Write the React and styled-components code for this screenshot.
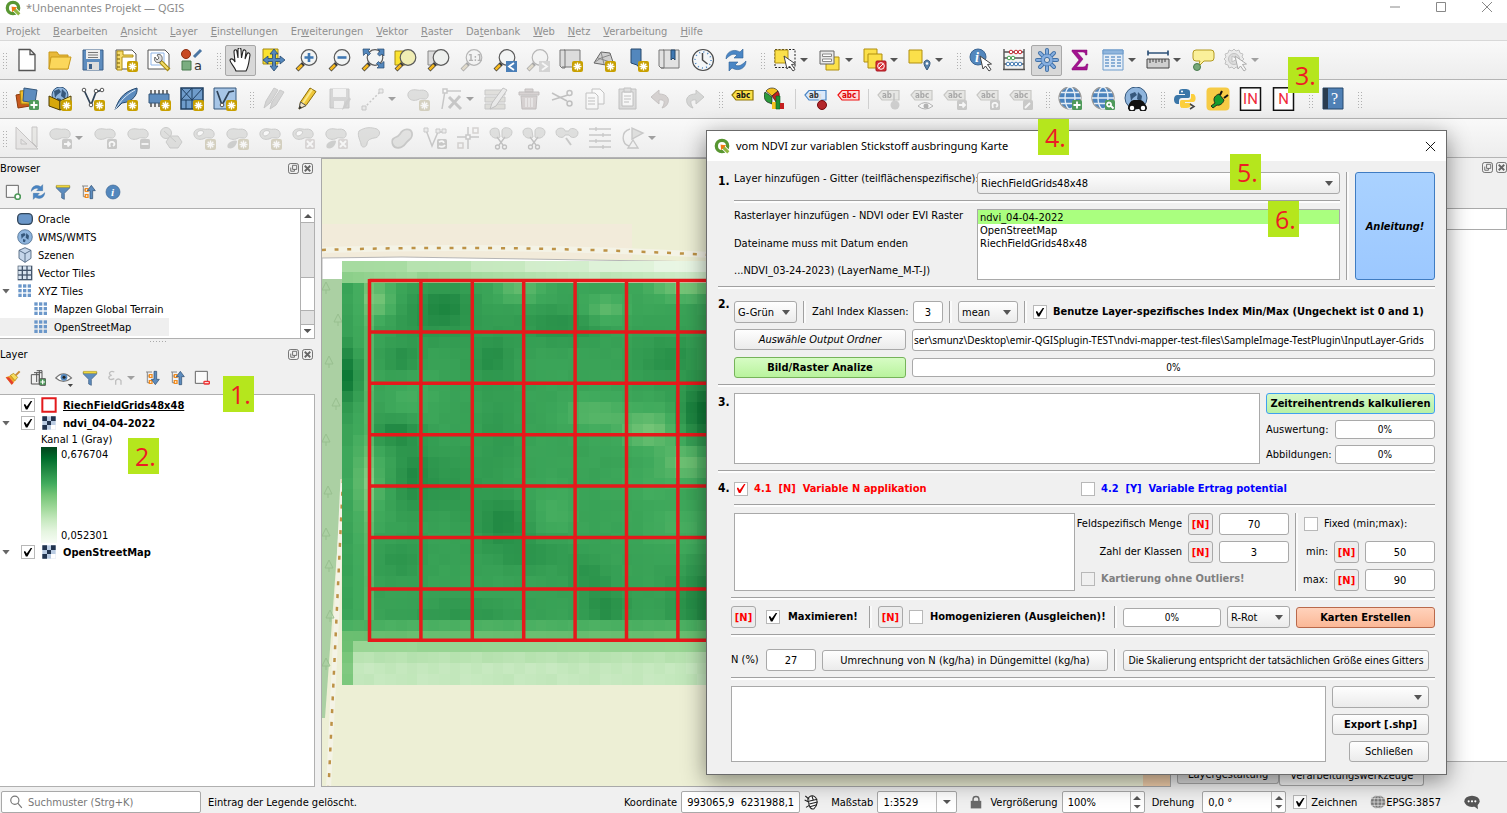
import * as React from "react"
import styled, { createGlobalStyle, css } from "styled-components"


const GlobalStyle = createGlobalStyle`
    *, *::before, *::after { box-sizing: border-box; }
    body {
        margin: 0;
        background: #f0f0f0;
        overflow: hidden;
    }
    body, button, input, select, textarea {
        font-family: "DejaVu Sans Condensed", "DejaVu Sans", sans-serif;
        font-size: 11px;
        color: #000;
    }
    ul { list-style: none; margin: 0; padding: 0; }
`;

/* ---------- icon drawings, all on a 24 x 24 board ---------- */

const Star = () => (
    <g>
        <rect x="13" y="13" width="11" height="11" rx="2" fill="#c8a000" />
        <path d="M18.5 14.5v8M14.5 18.5h8M15.7 15.7l5.6 5.6M21.3 15.7l-5.6 5.6" stroke="#fff" strokeWidth="1.4" />
    </g>
);
const Corner = ({ fill = "#8d8d85", d }) => (
    <g>
        <rect x="14" y="13" width="10" height="10" rx="1.5" fill={fill} />
        <path d={d} stroke="#fff" strokeWidth="1.8" fill="none" />
    </g>
);
const Lens = ({ fill = "#f2f4f4" }) => (
    <g>
        <path d="M8.500 15.500L2 22" stroke="#3c3c3c" strokeWidth="4" />
        <path d="M7 17L2.500 21.500" stroke="#f5b81e" strokeWidth="2.600" />
        <circle cx="14" cy="9.500" r="7.800" fill={fill} stroke="#5b5b5b" strokeWidth="1.200" />
    </g>
);
const Blob = ({ hole }) => (
    <g>
        <path d="M2 9C1 4 6 2 11 3c4 1 5-1 9 1 4 3 2 9-2 8-4 0-3-1-7 1-4 1-8 0-9-4z" fill="#bcc0b6" stroke="#8a8d86" />
        {hole && <path d="M5 8c0-3 3-4 6-3 2 2-2 5-4 5-1 0-2-1-2-2z" fill="#fff" stroke="#8a8d86" />}
    </g>
);
const Tag = ({ fill = "#d5d3b8", stroke = "#88856a", color = "#333", children = "abc" }) => (
    <g>
        <path d="M1 8L5 3.500H22V13H5z" fill={fill} stroke={stroke} strokeWidth="1.200" />
        <text x="5" y="11" fontSize="8" fontWeight="700" fontFamily="DejaVu Sans Condensed" fill={color}>{children}</text>
    </g>
);
const Earth = ({ r = 9, cx = 12, cy = 11 }) => (
    <g>
        <circle cx={cx} cy={cy} r={r} fill="#8fb5dd" stroke="#36587c" />
        <path d={`M${cx - 6} ${cy - 4}l5-2 2 3-4 3-2 3zM${cx + 2} ${cy - 6}l4 4-1 6-4-3zM${cx - 3} ${cy + 3}l4 1-1 4-3-1z`} fill="#36587c" />
    </g>
);
const Globe = () => (
    <g fill="none" stroke="#e6eef6" strokeWidth="1.300">
        <circle cx="12" cy="11" r="11" fill="#4b83bd" stroke="#9a9a9a" />
        <path d="M1 11h22M3 5.500h18M3 16.500h18" />
        <ellipse cx="12" cy="11" rx="5" ry="11" />
    </g>
);
const Cursor = () => <path d="M11 8l3 13 2.500-3 3.500 5 2-1.500-3.500-5 4-.5z" fill="#fff" stroke="#444" />;
const Scissors = () => (
    <g stroke="#777" fill="none" strokeWidth="1.300">
        <path d="M8 11l6 8M16 11l-6 8" /><circle cx="8.500" cy="21" r="2" /><circle cx="15.500" cy="21" r="2" />
    </g>
);
const Arrows = () => (
    <path d="M2 11C2 4 9 0 16 4l3-3v9h-9l3-3c-4-2-7 0-11 4zM22 13c0 7-7 11-14 7l-3 3v-9h9l-3 3c4 2 7 0 11-4z" fill="#4a86c5" stroke="#2d6096" strokeWidth=".6" />
);
const Funnel = () => (
    <g><path d="M2 3h20v3l-8 8v9l-4-2v-7L2 6z" fill="#5d8cbe" stroke="#36587c" /><path d="M2 2h20v3H2z" fill="#f6dc3b" stroke="#a58a12" strokeWidth=".6" /></g>
);
const TreeArrow = ({ down }) => (
    <g>
        <path d="M3 3h9M5 3v16M5 9h5M5 19h5" stroke="#888" strokeWidth="1.500" />
        <path d="M8 7h4v4H8zM8 16h4v4H8z" fill="#fff" stroke="#f28c1e" strokeWidth="2" />
        <path d={down ? "M15 2h4v12h4l-6 8-6-8h4z" : "M15 22h4V10h4l-6-8-6 8h4z"} fill="#5d8cbe" stroke="#2a4a6c" />
    </g>
);
const Dots = ({ full }) => (
    <g fill={full ? "#d9e4f0" : "#6b97c9"}>
        {full && <path d="M1 1h22v22H1z" fill="#44556b" />}
        {[2, 9, 16].map((y) => [2, 9, 16].map((x) => <rect key={x + "-" + y} x={x} y={y} width="5" height="5" />))}
    </g>
);
const Letters = ({ children }) => (
    <g>
        <rect x="1.500" y=".8" width="20" height="22.500" fill="#fff" stroke="#111" strokeWidth="1.500" />
        <text x="11.500" y="17" textAnchor="middle" fontSize="15" fontFamily="Roboto" fill="#ef2b3a">{children}</text>
    </g>
);
const Clock = () => (
    <g fill="none" stroke="#4a4a4a">
        <circle cx="12" cy="12" r="10.500" fill="#f4f6f7" strokeWidth="1.200" />
        <circle cx="12" cy="12" r="8" stroke="#4a86c5" strokeDasharray="1 3.200" strokeWidth="1.600" />
        <path d="M11.500 5v7l5 4" strokeWidth="1.500" />
    </g>
);

const ICONS = {
    file: <path d="M4 1.500h11l5 5v16H4zM15 1.500v5h5" fill="#fff" stroke="#555" strokeWidth="1.300" />,
    folder: <g stroke="#c99a1d"><path d="M1 4h8l2 3h9v14H1z" fill="#e8b93a" /><path d="M3 9h20l-3 12H1z" fill="#fbd75b" /></g>,
    save: <g><path d="M2 2h20v20H2z" fill="#5d8cbe" stroke="#3b5f88" /><path d="M5 2h14v9H5z" fill="#eee" /><path d="M7 4.500h10M7 7h10M7 9.500h10" stroke="#777" /><path d="M6 14h12v8H6z" fill="#dcdcdc" /><path d="M8 16h3v5H8z" fill="#3b5f88" /></g>,
    layoutNew: <g><path d="M2 2h16l4 4v15H2z" fill="#fff" stroke="#555" /><path d="M3 3h6v4h10v2H8v13H3z" fill="#f7dc6d" stroke="#b08f10" /><path d="M3 7h3M3 11h3M3 15h3M3 19h3" stroke="#705a08" /><Star /></g>,
    layoutMgr: <g><path d="M1 2h17l4 4v15H1z" fill="#fff" stroke="#555" /><path d="M4 5h13v12H4z" fill="none" stroke="#8fb5e8" /><path d="M13 13l9 9" stroke="#a58a12" strokeWidth="4" /><path d="M14 14l7 7" stroke="#f3dc6a" strokeWidth="2" /><path d="M8 9c-2 4 2 7 5 5l2-2c1-4-2-7-5-5l2 3-2 2z" fill="#ddd" stroke="#666" /></g>,
    style: <g><circle cx="6" cy="6" r="4.500" fill="#c84a24" stroke="#8c2f12" /><path d="M14 9l7-7" stroke="#4b76a3" strokeWidth="3" /><path d="M2 13h9v9H2z" fill="#7aad80" stroke="#487a4e" /><text x="14" y="22" fontSize="13" fill="#333" fontFamily="DejaVu Sans">a</text></g>,
    hand: <path d="M7 23c-1-4-6-8-6-11 1-2 4-1 5 2L5 4c0-3 3-3 3 0l1 6V2c0-3 3-3 3 0l.5 8L14 3c1-2 3-1 3 1l-1 7 2-5c1-2 3-1 3 1-1 5-1 11-4 16z" fill="#fff" stroke="#222" strokeWidth="1.100" />,
    pan: <g><path d="M1 1h15v15H1z" fill="#fbe330" stroke="#a58a12" /><path d="M12 1l4 5h-2.500v4.500H18V8l5 4-5 4v-2.500h-4.500V18H16l-4 5-4-5h2.500v-4.500H6V16l-5-4 5-4v2.500h4.500V6H8z" fill="#5387bd" stroke="#27496d" strokeWidth=".8" /></g>,
    zoomIn: <g><Lens /><path d="M14 5v9M9.500 9.500h9" stroke="#3f78b3" strokeWidth="2.600" /></g>,
    zoomOut: <g><Lens /><path d="M9.500 9.500h9" stroke="#3f78b3" strokeWidth="2.600" /></g>,
    zoomFull: <g><Lens /><path d="M2 1h7L7 3l2.500 2.500-2 2L5 5 2.500 7.500zM23 1v7l-2-2-2.500 2-2-2L19 3l-2.500-2zM23 20h-7l2-2-2.500-2.500 2-2L20 16l3-2.500z" fill="#5387bd" stroke="#27496d" strokeWidth=".7" /></g>,
    zoomSel: <g><path d="M1 3h10v14H1z" fill="#fbe330" stroke="#a58a12" /><Lens fill="#f0edb4" /></g>,
    zoomLayer: <g><path d="M1 3h10v14H1z" fill="#dcdcdc" stroke="#888" /><Lens fill="#eef0ee" /></g>,
    zoomNative: <g><Lens /><text x="8" y="13" fontSize="9" fontWeight="700" fill="#555">1:1</text></g>,
    zoomLast: <g><Lens /><rect x="13" y="13" width="11" height="11" fill="#4a7fb8" /><path d="M21 15l-5 3.500 5 3.500" stroke="#fff" strokeWidth="1.800" fill="none" /></g>,
    zoomNext: <g><Lens /><rect x="13" y="13" width="11" height="11" fill="#aaa" /><path d="M16 15l5 3.500-5 3.500" stroke="#fff" strokeWidth="1.800" fill="none" /></g>,
    mapNew: <g><path d="M1 2h5v18H3l-2-2zM5 2h16v17H3" fill="#dcdcdc" stroke="#777" /><Star /></g>,
    view3d: <g><path d="M2 15L9 4l9 1 3 9-7 3z" fill="#cfcfcf" stroke="#666" /><path d="M3 14l6-4 9-3M6 10l12 4M9 4l3 12" stroke="#888" fill="none" /><Star /></g>,
    bookmarkNew: <g><path d="M6 1h10v21l-4-5-6-2z" fill="#5387bd" stroke="#27496d" /><Star /></g>,
    bookmarks: <g><path d="M1 2h5v18H3l-2-2zM5 2h16v18H3" fill="#e2e2e2" stroke="#777" /><path d="M13 2h4v10l-2-2-2 2z" fill="#3f78b3" stroke="#27496d" /></g>,
    clock: <Clock />,
    refresh: <Arrows />,
    select: <g><path d="M2 1.500h20v18H2z" fill="none" stroke="#222" strokeDasharray="2 1.500" /><path d="M2 2h13v13H2z" fill="#fbe04a" stroke="#b08f10" /><Cursor /></g>,
    selectForm: <g><path d="M8 9h13v13H8z" fill="#fbe04a" stroke="#b08f10" /><path d="M2 3h14v13H2z" fill="#e9e9e9" stroke="#666" /><path d="M4.500 6h9v2.500h-9zM4.500 11h9v2.500h-9z" fill="#fff" stroke="#888" /></g>,
    deselect: <g fill="#fbe04a" stroke="#b08f10"><path d="M1 1h13v13H1z" /><path d="M5 6h14v14H5z" /><rect x="13" y="13" width="10" height="10" rx="1" fill="#d8313a" stroke="#a5141d" /><circle cx="18" cy="18" r="3.300" fill="none" stroke="#fff" /><path d="M16 20l4-4" stroke="#fff" /></g>,
    selectLoc: <g><path d="M1 2h13v13H1z" fill="#fbe04a" stroke="#b08f10" /><path d="M19 22c-4-6-4-9 0-10 4 1 4 4 0 10z" fill="#5b84ad" stroke="#36587c" /><circle cx="19" cy="15.500" r="1.300" fill="#fff" /></g>,
    identify: <g><circle cx="9" cy="9" r="8" fill="#5387bd" stroke="#3b6593" /><text x="6" y="14" fontSize="14" fontStyle="italic" fontWeight="700" fill="#fff" fontFamily="Liberation Serif">i</text><Cursor /></g>,
    abacus: <g fill="none" stroke="#555"><path d="M2 1v20M22 1v20M1 21.500h22M2 4h20M2 10h20M2 16h20" strokeWidth="1.400" /><g stroke="#c5242c"><circle cx="9" cy="4" r="1.800" fill="#fff" /><circle cx="14" cy="4" r="1.800" fill="#fff" /><circle cx="18" cy="4" r="1.800" fill="#fff" /></g><g stroke="#3fa04c"><circle cx="7" cy="10" r="1.800" fill="#fff" /><circle cx="11" cy="10" r="1.800" fill="#fff" /></g><g stroke="#3f78b3"><circle cx="6" cy="16" r="1.800" fill="#fff" /><circle cx="10" cy="16" r="1.800" fill="#fff" /><circle cx="14" cy="16" r="1.800" fill="#fff" /><circle cx="18" cy="16" r="1.800" fill="#fff" /></g></g>,
    gear: <g><path d="M12 2v20M2 12h20M5 5l14 14M19 5L5 19" stroke="#3f6fa5" strokeWidth="4" strokeLinecap="round" /><path d="M12 2v20M2 12h20M5 5l14 14M19 5L5 19" stroke="#85aee0" strokeWidth="2.200" strokeLinecap="round" /><circle cx="12" cy="12" r="6" fill="#85aee0" stroke="#3f6fa5" strokeWidth=".6" /><circle cx="12" cy="12" r="2.600" fill="#dcdcdc" stroke="#3f6fa5" /></g>,
    sum: <path d="M4 2h15v5h-1.500c0-2-1-3-3-3H9l6 7-6.500 8H15c2 0 3-1 3.500-3H20l-1 6H4v-1.500L11 12 4 3.500z" fill="#a2128f" stroke="#820b73" strokeWidth=".5" />,
    table: <g stroke="#6c9bcb" fill="none"><path d="M2 2h20v20H2z" fill="#e6eef7" /><path d="M2 2h20v4H2z" fill="#8fb5dd" /><path d="M4 9h4M10 9h4M16 9h4M4 12h4M10 12h4M16 12h4M4 15h4M10 15h4M16 15h4M4 18h4M10 18h4M16 18h4" strokeWidth="1.300" /></g>,
    ruler: <g stroke="#444"><path d="M2 5h20M2 2.500v5M22 2.500v5" stroke="#2f5379" strokeWidth="1.700" /><path d="M1 11h22v9H1z" fill="#cfcfcf" /><path d="M4 11v4M7 11v3M10 11v4M13 11v3M16 11v4M19 11v3" /></g>,
    tip: <g><path d="M5 2h15q3 0 3 3v5q0 3-3 3h-7l-6 6 2-6H5q-3 0-3-3V5q0-3 3-3z" fill="#faf09a" stroke="#b39a20" /><circle cx="6" cy="19" r="3.500" fill="#77a878" stroke="#487a4e" /></g>,
    action: <g fill="#ddd" stroke="#777"><path d="M10 1l2 2 3-1 1 3 3 1-1 3 2 2-2 2 1 3-3 1-1 3-3-1-2 2-2-2-3 1-1-3-3-1 1-3-2-2 2-2-1-3 3-1 1-3 3 1z" /><circle cx="10" cy="11" r="5.500" fill="#bbb" /><path d="M8 8l5 3-5 3z" fill="#fff" /><Cursor /></g>,

    addLayer: <g><path d="M1 8l11-2 3 13-12 2z" fill="#c8591e" stroke="#8c3a0d" /><path d="M5 4l12-1 1 14H6z" fill="#f0bd2c" stroke="#a37b0c" /><path d="M9 1l13 2-2 13-12-2z" fill="#5d8cbe" stroke="#36587c" /><Corner fill="#4f9a5b" d="M19 14.500v7M15.500 18h7" /></g>,
    package: <g><Earth r={8} cy={8} /><path d="M1 9l11 5v9L1 19z" fill="#d7a80c" stroke="#4a3b05" /><path d="M12 14l11-5v10l-11 4z" fill="#f9e468" stroke="#4a3b05" /><Star /></g>,
    vNew: <g><path d="M3 3l7 15 5-13 6-2" fill="none" stroke="#2f4256" strokeWidth="1.700" /><g fill="#fff" stroke="#555"><circle cx="3" cy="3" r="1.800" /><circle cx="10" cy="18" r="1.800" /><circle cx="15" cy="4" r="1.800" /><circle cx="21" cy="3" r="1.800" /></g><Star /></g>,
    feather: <g><path d="M1 23C4 14 8 5 23 1c1 6-4 14-15 15z" fill="#5d8cbe" stroke="#27496d" /><path d="M1 23C7 13 12 8 21 3" stroke="#d9e7f5" fill="none" /><Star /></g>,
    chip: <g><path d="M4 3v17M8 3v17M12 3v17M16 3v17M20 3v17" stroke="#333" strokeWidth="1.300" /><path d="M2 7h20v9H2z" fill="#5d8cbe" stroke="#36587c" /><Star /></g>,
    mesh: <g><path d="M1 1h22v21H1z" fill="#6f9ccb" stroke="#1f3e60" strokeWidth="1.500" /><path d="M1 13h22M12 1v21M1 1l11 12L23 1M1 13L12 1M6 13v9" stroke="#1f3e60" fill="none" /><Star /></g>,
    vLayer: <g><path d="M1 1h22v21H1z" fill="#a6c5e6" stroke="#36587c" /><path d="M4 4l5 14 7-13 5-1" fill="none" stroke="#2f4256" strokeWidth="1.700" /><circle cx="9" cy="18" r="1.800" fill="#fff" stroke="#555" /><Star /></g>,
    pencils: <g fill="#aaa" stroke="#888"><path d="M2 21l2-7L12 1l4 2-8 13zM8 22l2-7 8-12 4 2-8 13z" /></g>,
    pencil: <g><path d="M4 22l1.500-7L15 1l6 3.500-10 14z" fill="#efc73a" stroke="#8b6c0a" /><path d="M8 16L17 2.500" stroke="#fbe98c" strokeWidth="2" /><path d="M4 22l1.500-7 5.500 3.500z" fill="#f3e6c8" stroke="#555" /><path d="M4 22l.8-3 2 1.300z" fill="#222" /></g>,
    saveEdit: <g><path d="M2 2h19v19H2z" fill="#aaa" stroke="#888" /><path d="M5 2h13v8H5zM6 14h10v7H6z" fill="#eee" /><path d="M14 23l2-6 5-7 2 2-5 8z" fill="#999" /></g>,
    digitize: <g><path d="M3 21L20 4" stroke="#888" strokeWidth="1.500" strokeDasharray="2 2" /><path d="M1 19h4v4H1zM18 2h4v4h-4z" fill="#ddd" stroke="#888" /></g>,
    blobNew: <g><Blob /><Star /></g>,
    vertex: <g stroke="#888" fill="none" strokeWidth="1.500"><path d="M3 22L6 4h16" /><path d="M4 2h4v4H4z" fill="#fff" /><path d="M10 10l12 12M21 9L10 21" strokeWidth="3" /></g>,
    multiEdit: <g><path d="M1 3h20v5H1zM1 10h20v5H1zM1 17h20v5H1z" fill="#c5c29c" stroke="#888" /><path d="M6 22l2-6L19 1l4 2-11 16z" fill="#ddd" stroke="#777" /></g>,
    trash: <g fill="#c89a9a" stroke="#8e6a6a"><path d="M2 5h20v3H2zM8 2h8v3H8zM4 9h16l-1 13H5z" /><path d="M9 11v9M12 11v9M15 11v9" stroke="#fff" /></g>,
    cut: <g fill="none" stroke="#777" strokeWidth="1.500"><path d="M2 6l15 8M2 13l16-5" /><circle cx="19.500" cy="6" r="2.500" /><circle cx="19.500" cy="16.500" r="2.500" /></g>,
    copy: <g fill="#fff" stroke="#777"><path d="M9 2h8l4 4v11H9z" /><path d="M3 6h9l3 3v13H3z" /><path d="M5 11h7M5 14h7M5 17h7" /></g>,
    paste: <g fill="#bbb" stroke="#777"><path d="M3 2h17v20H3z" /><path d="M6 5h11v14H6z" fill="#fff" /><path d="M8 1h7v4H8z" /><path d="M8 9h7M8 12h7M8 15h5" /></g>,
    undo: <path d="M10 3L2 10l8 7v-4c5-1 7 2 3 8 8-2 10-14-3-14z" fill="#bf9a92" stroke="#96736c" />,
    redo: <path d="M14 3l8 7-8 7v-4c-5-1-7 2-3 8-8-2-10-14 3-14z" fill="#a7ada5" stroke="#7e857c" />,
    labelYellow: <Tag fill="#fbe04a" stroke="#8f7606" color="#111" />,
    diagram: <g><path d="M8 10L1 5a8 8 0 0 0 2 10l5 2z" fill="#2b9a3c" stroke="#111" strokeWidth=".6" /><path d="M8 9L2 4c3-4 9-4 12 0z" fill="#f4c21f" stroke="#111" strokeWidth=".6" /><path d="M8 9l6-5a8 8 0 0 1-2 11z" fill="#c41f1f" stroke="#111" strokeWidth=".6" /><path d="M8 15h4v7H8z" fill="#f4c21f" /><path d="M12 9h4v13h-4z" fill="#1f8f35" stroke="#0b5a1b" strokeWidth=".6" /><path d="M16 16h4v6h-4z" fill="#c41f1f" /></g>,
    labelPin: <g><Tag fill="#dbe9fa" stroke="#4a86c5">ab</Tag><path d="M16 7v9" stroke="#ddd" strokeWidth="2.500" /><circle cx="18" cy="18" r="4.500" fill="#b3262a" stroke="#74090d" /></g>,
    labelRed: <Tag fill="#ffd9d9" stroke="#e11" color="#d00" />,
    labelMovePin: <g><Tag>ab</Tag><path d="M17 6v10" stroke="#777" strokeWidth="1.500" /><circle cx="18" cy="18" r="4.500" fill="#999" /></g>,
    labelShow: <g><Tag /><path d="M8 19q7-7 15 0-8 6-15 0z" fill="#fff" stroke="#555" /><circle cx="16" cy="19" r="2.500" fill="#555" /></g>,
    labelMove: <g><Tag /><Corner d="M16 18h6M19.500 15.500L22 18l-2.500 2.500" /></g>,
    labelRotate: <g><Tag /><Corner d="M17 21q-2-6 3-5 3 2 0 4" /></g>,
    labelEdit: <g><Tag /><Corner d="M16 21l5-5" /></g>,
    globeAdd: <g><Globe /><Corner fill="#4f9a5b" d="M19 14.500v7M15.500 18h7" /></g>,
    globeFind: <g><Globe /><Corner fill="#4f9a5b" d="M20 19l2.500 2.500M18 15.500a2 2 0 1 0 .1 0" /></g>,
    globeLook: <g><Earth r={11} /><path d="M4 22c0-5 3-9 6-9h6c3 0 6 4 7 9" fill="#111" /><circle cx="8" cy="21" r="3" fill="#fff" stroke="#111" strokeWidth="1.500" /><circle cx="19" cy="21" r="3" fill="#fff" stroke="#111" strokeWidth="1.500" /></g>,
    python: <g><path d="M11 2c-5 0-5 1-5 5h6v1H4c-4 0-4 9 0 9h2v-3c0-2 1-3 3-3h6c2 0 2-1 2-3V5c0-3-3-3-6-3z" fill="#3a76a8" /><path d="M12 21c5 0 6-1 6-5h-6v-1h8c4 0 3-8 0-8h-2v3c0 2-1 3-3 3H9c-2 0-2 1-2 3v2c0 3 2 3 5 3z" fill="#fccf3d" /><circle cx="9" cy="4.500" r="1" fill="#fff" /><path d="M17 17l4 2.500-4 2.500" stroke="#444" strokeWidth="1.500" fill="none" /></g>,
    plug: <g><rect x=".5" y=".5" width="23" height="23" rx="4" fill="#f6cb45" /><path d="M5 19l4-3c-3-5 1-8 4-9l5 6c-1 4-5 6-7 5l-4 3z" fill="#169c2f" stroke="#111" strokeWidth=".8" /><path d="M14 8l2-4M18 11l4-3" stroke="#111" strokeWidth="2" /></g>,
    inBox: <Letters>IN</Letters>,
    nBox: <Letters>N</Letters>,
    help: <g><path d="M2 1h20v21H2z" fill="#4f80b5" stroke="#27496d" /><path d="M2 1h5v21H2z" fill="#2a3c4f" /><text x="10" y="17" fontSize="16" fontFamily="Liberation Serif" fill="#fff">?</text></g>,

    cad: <g fill="#ddd1cd" stroke="#8d7f7b"><path d="M17 1h5v20l-5-5z" fill="#d6d6c0" /><path d="M1 1v22h22zM6 13v5h6z" /></g>,
    blobMove: <g><Blob /><Corner d="M16 18h6M19.500 15.500L22 18l-2.500 2.500" /></g>,
    blobTurn: <g><Blob /><Corner d="M17 21q-2-6 3-5 3 2 0 4" /></g>,
    blobScale: <g><Blob /><Corner d="M15.500 18h7" /></g>,
    blobHex: <g fill="#bcc0b6" stroke="#8a8d86"><circle cx="7" cy="7" r="5.500" /><path d="M11 10h8l4 6-4 6h-8l-4-6z" /><path d="M5 5l12 11" /></g>,
    ring: <g><Blob hole /><Star /></g>,
    part: <g><Blob /><path d="M3 22c-3-4 5-9 9-7 0 4-4 9-9 7z" fill="#999c94" /><Star /></g>,
    ringFill: <g><Blob hole /><Star /></g>,
    ringDel: <g><Blob hole /><Corner fill="#c8a8a4" d="M16 15l6 6M22 15l-6 6" /></g>,
    partDel: <g><Blob /><path d="M3 22c-3-4 5-9 9-7 0 4-4 9-9 7z" fill="#999c94" /><Corner fill="#c8a8a4" d="M16 15l6 6M22 15l-6 6" /></g>,
    reshape: <path d="M2 5c6-4 12-4 18-2 5 3 2 9-3 9-5 1-7 3-7 6-1 4-6 4-6 0-1-4-4-9-2-13z" fill="#bcc0b6" stroke="#8a8d86" />,
    offset: <path d="M3 13c3-3 4-1 7-5 3-6 11-6 12-1 1 6-3 6-6 10-4 6-11 6-13 2-1-2-1-5 0-6z" fill="#c4c8be" stroke="#8a8d86" strokeWidth="1.800" />,
    reverse: <g><path d="M3 4l6 16 6-14h6" fill="none" stroke="#888" strokeWidth="1.500" /><path d="M1 2h4v4H1zM13 3h4v4h-4zM19 3h4v4h-4z" fill="#ddd" stroke="#888" /><Corner d="M16 16q4-2 5 1M16 20q4 2 6-1" /></g>,
    trim: <g stroke="#888" fill="none" strokeWidth="1.500"><path d="M12 1v8M12 13v10M1 11h9M14 11h9" /><path d="M10 9h4v4h-4z" fill="#fff" /><path d="M17 2h5v5h-5zM2 17h5v5H2z" stroke="#b59c8c" /></g>,
    split: <g fill="#bcc0b6" stroke="#8a8d86"><path d="M1 6c0-5 9-5 9-1l1 6c-4 3-10 0-10-5zM13 5c0-5 10-4 10 1s-6 8-10 5z" /><Scissors /></g>,
    merge: <g fill="#bcc0b6" stroke="#8a8d86"><path d="M1 6c0-5 9-5 9-1h4c0-4 9-3 9 2s-7 6-9 2h-4c-1 4-9 3-9-3z" /><path d="M11 12l5 7" strokeWidth="2" /></g>,
    align: <g stroke="#888" strokeWidth="1.300"><path d="M1 3h22M1 9h22M1 15h22M1 21h22M8 1v4M15 7v4M8 13v4M15 19v4" /></g>,
    symbolTurn: <g fill="none" stroke="#888" strokeWidth="1.400"><path d="M9 3C-1 6 1 18 8 20" /><path d="M11 2v11l11-6z" fill="#bcc0b6" /><path d="M7 22l5-8 5 8z" /></g>,

    addSmall: <g><path d="M2 2h18v18H2z" fill="#fafafa" stroke="#666" strokeWidth="1.500" /><circle cx="19" cy="19" r="4" fill="#fff" stroke="#4f9a5b" strokeWidth="2.500" /></g>,
    funnel: <Funnel />,
    collapse: <TreeArrow />,
    expand: <TreeArrow down />,
    info: <g><circle cx="12" cy="12" r="10.500" fill="#5387bd" stroke="#3b6593" /><text x="9" y="18" fontSize="17" fontStyle="italic" fontWeight="700" fill="#fff" fontFamily="Liberation Serif">i</text></g>,
    brush: <g><path d="M1 11l8-3 7 7-6 7z" fill="#f0a52c" /><path d="M1 11l5 0 7 8-3 3z" fill="#e4402e" /><path d="M8 8l5-3 6 6-4 5z" fill="#f6dc5b" stroke="#a37b0c" /><path d="M16 8l6-6" stroke="#c98a35" strokeWidth="3" /></g>,
    group: <g fill="none" stroke="#555" strokeWidth="1.500"><path d="M2 7h12v14H2zM6 4h12v14M10 4v14M14 1v16" /><path d="M10 1h8v3" /><Corner fill="#4f9a5b" d="M19 14.500v7M15.500 18h7" /></g>,
    eye: <g><path d="M1 12Q11 1 22 12 11 21 1 12z" fill="#fff" stroke="#777" strokeWidth="1.500" /><circle cx="12" cy="11" r="4.500" fill="#5387bd" /><circle cx="12" cy="11" r="2" fill="#222" /><path d="M17 20h7l-3.500 4z" fill="#444" /></g>,
    epsilon: <g fill="none" stroke="#777" strokeWidth="2"><path d="M11 3C4 0 1 7 7 8 0 9 2 17 11 13" /><path d="M13 22v-6q4-5 8 0v6" /></g>,
    remove: <g><path d="M2 2h18v18H2z" fill="#fafafa" stroke="#666" strokeWidth="1.500" /><rect x="14" y="16" width="10" height="6" rx="2" fill="#e33" /><path d="M16 19h6" stroke="#fff" strokeWidth="1.500" /></g>,

    db: <rect x="1" y="4" width="22" height="16" rx="6" fill="#6b97c9" stroke="#33475c" strokeWidth="2" />,
    earth: <Earth r={11} cy={12} />,
    cube: <g fill="#c5d6ea" stroke="#4a617c" strokeWidth="1.300"><path d="M12 1l9 4v12l-9 6-9-6V5z" /><path d="M3 5l9 5 9-5M12 10v13" fill="none" /></g>,
    grid: <Dots full />,
    tiles: <Dots />,
    raster: <g fill="#22344f"><path d="M2 2h20v20H2z" fill="#b9cbe2" /><path d="M2 2h7v7H2zM15 2h7v7h-7zM9 9h6v6H9zM2 15h7v7H2z" /><path d="M15 15h7v7h-7z" fill="#fff" /></g>,
    redBox: <path d="M2 2h20v20H2z" fill="#fff" stroke="#e31a1c" strokeWidth="3" />,

    search: <g fill="none" stroke="#777" strokeWidth="2"><circle cx="10" cy="9" r="7" /><path d="M15 14l7 8" /></g>,
    extent: <g fill="#fff" stroke="#222" strokeWidth="1.600"><path d="M7 12c-4-6 4-12 9-8 6 4 4 14-1 18-5 2-8-4-8-10z" /><path d="M7 11l13-3M12 3l2 7M8 15l12-3M9 19l10-3M2 3l6 5M1 9l6 3M3 20l5-3" /></g>,
    lock: <g fill="#6a6a6a"><path d="M3 10h18v13H3z" /><path d="M7 11V7c0-6 10-6 10 0v4" fill="none" stroke="#6a6a6a" strokeWidth="2.500" /></g>,
    proj: <g fill="#777" stroke="#f0f0f0" strokeWidth="1"><ellipse cx="12" cy="12" rx="11.500" ry="10" /><path d="M1 12h22M3 7h18M3 17h18M12 2v20" /><ellipse cx="12" cy="12" rx="6" ry="10" fill="none" /></g>,
    chat: <g fill="#555"><ellipse cx="12" cy="11" rx="11.500" ry="8.500" /><path d="M13 17l8 6-1-9z" /><g fill="#fff"><circle cx="7" cy="11" r="1.600" /><circle cx="12" cy="11" r="1.600" /><circle cx="17" cy="11" r="1.600" /></g></g>,
    logo: <g><circle cx="12" cy="12" r="8.500" fill="none" stroke="#589632" strokeWidth="5" /><path d="M12 12l10 10" stroke="#fff" strokeWidth="7" /><path d="M12.500 12.500l9 9" stroke="#8fb63e" strokeWidth="4.500" /><path d="M11 11l5 .5-4.500 4.500z" fill="#ee7913" stroke="#ee7913" strokeWidth="2" /></g>,
    minimize: <path d="M2 12h20" stroke="#888" strokeWidth="2" />,
    maximize: <path d="M3 3h18v18H3z" fill="none" stroke="#888" strokeWidth="2" />,
    close: <path d="M2 2l20 20M22 2L2 22" stroke="currentColor" strokeWidth="2" />,
    float: <g fill="none" stroke="#666" strokeWidth="2"><rect x="1" y="1" width="22" height="22" rx="5" /><path d="M10 5h9v9h-9zM6 10v8h8v-4" /></g>,
    shut: <g fill="none" stroke="#666"><rect x="1" y="1" width="22" height="22" rx="5" strokeWidth="2" /><path d="M6 6l12 12M18 6L6 18" strokeWidth="4" /></g>,
};

const Svg = styled.svg`
    display: block;
    flex: none;
    width: ${(p) => p.$size}px;
    height: ${(p) => p.$size}px;
    ${(p) => p.$off && css`
        opacity: 0.4;
        filter: grayscale(0.75);
    `}
`;
const Icon = ({ name, size = 24, off }) => (
    <Svg viewBox="0 0 24 24" $size={size} $off={off} aria-hidden="true">{ICONS[name]}</Svg>
);

/* ---------- main window ---------- */

const Window = styled.div`
    position: relative;
    display: flex;
    flex-direction: column;
    height: 100vh;
    overflow: hidden;
    background: #f0f0f0;
`;
const TitleBar = styled.header`
    display: flex;
    align-items: flex-start;
    height: 23px;
    padding: 0 14px 0 5px;
    gap: 5px;
    background: #fff;
    color: #8c8c8c;
    font: 11px/16px "Noto Sans", sans-serif;
`;
const TitleText = styled.span`
    flex: 1;
`;
const WindowButton = styled.button`
    display: flex;
    padding: 1px 0 0;
    margin-left: 29px;
    border: 0;
    background: none;
    color: #888;
`;
const MenuBar = styled.nav`
    display: flex;
    gap: 13px;
    height: 18px;
    padding: 1px 6px 0;
    border-bottom: 1px solid #d8d8d8;
`;
const MenuLink = styled.a`
    line-height: 16px;
    color: #8f8f8f;
    text-decoration: none;
`;
const ToolRow = styled.div`
    display: flex;
    align-items: center;
    height: 39px;
    background: linear-gradient(#f9f9f9, #ededed);
    border-bottom: 1px solid #b4b4b4;
`;
const Handle = styled.span`
    width: 5px;
    height: 17px;
    margin: 0 3px 0 8px;
    background: radial-gradient(circle, #b0b0b0 0.8px, transparent 1px) 0 0 / 3px 3px;
    &:first-child { margin-left: 2px; }
`;
const Divider = styled.span`
    width: 1px;
    height: 20px;
    margin: 0 3px 0 3px;
    background: #cfcfcf;
`;
const Tool = styled.button`
    display: flex;
    align-items: center;
    justify-content: space-between;
    width: ${(p) => (p.$menu ? 43 : 31)}px;
    height: 31px;
    margin: 0 1px;
    padding: 0 3px;
    border: 1px solid ${(p) => (p.$on ? "#a8a8a8" : "transparent")};
    border-radius: 2px;
    background: ${(p) => (p.$on ? "#d8d8d8" : "none")};
`;
const Caret = styled.span`
    width: 8px;
    height: 4px;
    background: ${(p) => (p.$off ? "#a0a0a0" : "#555")};
    clip-path: polygon(0 0, 100% 0, 50% 100%);
`;

const MENU = [["Pro", "j", "ekt"], ["", "B", "earbeiten"], ["", "A", "nsicht"], ["", "L", "ayer"], ["", "E", "instellungen"], ["Er", "w", "eiterungen"],
    ["", "V", "ektor"], ["", "R", "aster"], ["Da", "t", "enbank"], ["", "W", "eb"], ["", "N", "etz"], ["", "V", "erarbeitung"], ["", "H", "ilfe"]];

/* "|" = handle, "/" = divider, "+" = with menu arrow, "-" = disabled, "*" = pressed */
const ROWS = [
    "| file folder save layoutNew layoutMgr style | hand* pan zoomIn zoomOut zoomFull zoomSel zoomLayer zoomNative- zoomLast zoomNext- mapNew view3d bookmarkNew bookmarks clock refresh | select+ selectForm+ deselect+ selectLoc+ | identify abacus gear* sum table+ ruler+ tip action-+",
    "| addLayer package vNew feather chip mesh vLayer | pencils- pencil saveEdit- digitize-+ blobNew- vertex-+ multiEdit- trash- cut- copy- paste- undo- redo- | labelYellow diagram / labelPin labelRed / labelMovePin- labelShow- labelMove- labelRotate- labelEdit- | globeAdd globeFind globeLook | python plug inBox nBox | help |",
    "| cad- blobMove-+ blobTurn- blobScale- blobHex- ring- part- ringFill- ringDel- partDel- reshape- offset- reverse- trim- split- split- merge- align- symbolTurn-+",
];

const ToolBar = ({ items }) => (
    <ToolRow role="toolbar">
        {items.split(" ").map((item, i) => {
            if (item === "|") return <Handle key={i} />;
            if (item === "/") return <Divider key={i} />;
            const name = item.replace(/[-+*]/g, "");
            const off = item.includes("-");
            return (
                <Tool key={i} aria-label={name} $on={item.includes("*")} $menu={item.includes("+")}>
                    <Icon name={name} off={off} />
                    {item.includes("+") && <Caret $off={off} />}
                </Tool>
            );
        })}
    </ToolRow>
);

const Main = styled.main`
    display: flex;
    flex: 1;
    min-height: 0;
`;
const LeftDock = styled.aside`
    display: flex;
    flex-direction: column;
    flex: none;
    width: 315px;
    margin-right: 6px;
    padding-top: 1px;
`;
const DockTitle = styled.div`
    display: flex;
    align-items: center;
    gap: 3px;
    height: 20px;
    padding-right: ${(p) => (p.$flush ? 0 : 2)}px;
    padding-bottom: 2px;
    span { flex: 1; }
`;
const DockButton = styled.button`
    padding: 0;
    border: 0;
    background: none;
`;
const DockTools = styled.div`
    display: flex;
    align-items: center;
    gap: 9px;
    height: 29px;
    padding: 0 5px 3px;
`;
const DockTool = styled.button`
    display: flex;
    align-items: center;
    gap: 4px;
    padding: 0;
    border: 0;
    background: none;
`;
const Tree = styled.div`
    display: flex;
    flex: ${(p) => (p.$fill ? "1" : "none")};
    height: ${(p) => (p.$fill ? "auto" : "131px")};
    overflow: hidden;
    background: #fff;
    border: 1px solid #b0b0b0;
    border-left: 0;
`;
const TreeList = styled.ul`
    flex: 1;
    padding-top: 1px !important;
`;
const TreeRow = styled.li`
    display: flex;
    align-items: center;
    width: ${(p) => (p.$hover ? "169px" : "auto")};
    height: 18px;
    padding-left: ${(p) => (p.$level ? 33 : 2)}px;
    gap: 5px;
    background: ${(p) => (p.$hover ? "#efefef" : "none")};
    font-weight: ${(p) => (p.$bold ? 700 : 400)};
    text-decoration: ${(p) => (p.$active ? "underline" : "none")};
`;
const Expander = styled.span`
    width: 8px;
    height: 5px;
    margin-right: 2px;
    background: ${(p) => (p.$open ? "#666" : "transparent")};
    clip-path: polygon(0 0, 100% 0, 50% 100%);
`;
const ScrollBar = styled.div`
    display: flex;
    flex-direction: column;
    justify-content: space-between;
    align-items: center;
    width: 14px;
    padding: 5px 0;
    border-left: 1px solid #b0b0b0;
    background: linear-gradient(#fff 13px, #b0b0b0 13px 14px, #e2e2e2 14px 68px, #b0b0b0 68px 69px, #fff 69px 101px, #b0b0b0 101px 102px, #e2e2e2 102px 115px, #b0b0b0 115px 116px, #fff 116px);
`;
const ScrollArrow = styled(Caret)`
    transform: ${(p) => (p.$up ? "rotate(180deg)" : "none")};
`;
const SplitGrip = styled.div`
    width: 17px;
    height: 6px;
    margin: 0 auto;
    background: radial-gradient(circle, #aaa 0.8px, transparent 1px) 0 1px / 3px 3px repeat-x;
`;
const Legend = styled.li`
    padding-left: 41px;
    line-height: 15px;
    height: 111px;
`;
const LegendRamp = styled.div`
    display: flex;
    height: 96px;
    gap: 4px;
    &::before {
        content: "";
        width: 16px;
        background: linear-gradient(#00441b, #006d2c 12%, #238b45 25%, #41ab5d 38%, #74c476 50%, #a1d99b 64%, #c7e9c0 76%, #e5f5e0 88%, #f7fcf5);
    }
`;
const LegendValues = styled.div`
    display: flex;
    flex-direction: column;
    justify-content: space-between;
`;

const Check = styled.input.attrs({ type: "checkbox" })`
    appearance: none;
    display: grid;
    place-items: center;
    flex: none;
    width: 14px;
    height: 14px;
    margin: 0;
    border: 1px solid #b8b8b8;
    background: ${(p) => (p.disabled ? "#f0f0f0" : "#fff")};
    color: ${(p) => p.$color || "#000"};
    &:checked::before {
        content: "";
        width: 9px;
        height: 9px;
        background: currentColor;
        clip-path: polygon(0 42%, 20% 42%, 36% 68%, 84% 0, 100% 0, 44% 100%, 26% 100%);
    }
`;
const LayerCheck = styled(Check)`
    margin-left: 4px;
    margin-right: 1px;
    & ~ label { margin-left: 1px; }
`;

const BROWSER = [["db", "Oracle"], ["earth", "WMS/WMTS"], ["cube", "Szenen"], ["grid", "Vector Tiles"], ["tiles", "XYZ Tiles", 0, true],
    ["tiles", "Mapzen Global Terrain", 1], ["tiles", "OpenStreetMap", 1], ["db", ""]];

const DockHead = ({ title, flush }) => (
    <DockTitle $flush={flush}>
        <span>{title}</span>
        <DockButton aria-label="Lösen"><Icon name="float" size={11} /></DockButton>
        <DockButton aria-label="Schließen"><Icon name="shut" size={11} /></DockButton>
    </DockTitle>
);

const LayerRow = ({ id, icon, text, open }) => (
    <>
        <Expander $open={open} />
        <LayerCheck id={id} defaultChecked />
        <Icon name={icon} size={16} />
        <label htmlFor={id}>{text}</label>
    </>
);

const Docks = () => (
    <LeftDock>
        <DockHead title="Browser" />
        <DockTools>
            {["addSmall", "refresh", "funnel", "collapse", "info"].map((n) => (
                <DockTool key={n} aria-label={n}><Icon name={n} size={16} /></DockTool>
            ))}
        </DockTools>
        <Tree>
            <TreeList>
                {BROWSER.map(([icon, text, level, open], i) => (
                    <TreeRow key={i} $level={level} $hover={text === "OpenStreetMap"}>
                        {!level && <Expander $open={open} />}
                        <Icon name={icon} size={16} />
                        {text}
                    </TreeRow>
                ))}
            </TreeList>
            <ScrollBar><ScrollArrow $up /><ScrollArrow /></ScrollBar>
        </Tree>
        <SplitGrip />
        <DockHead title="Layer" />
        <DockTools>
            <DockTool aria-label="Stil"><Icon name="brush" size={16} /></DockTool>
            <DockTool aria-label="Gruppe"><Icon name="group" size={16} /></DockTool>
            <DockTool aria-label="Sichtbarkeit"><Icon name="eye" size={18} /></DockTool>
            <DockTool aria-label="Filter"><Icon name="funnel" size={16} /></DockTool>
            <DockTool aria-label="Ausdruck"><Icon name="epsilon" size={16} off /><Caret $off /></DockTool>
            <DockTool aria-label="Alles ausklappen"><Icon name="expand" size={16} /></DockTool>
            <DockTool aria-label="Alles einklappen"><Icon name="collapse" size={16} /></DockTool>
            <DockTool aria-label="Entfernen"><Icon name="remove" size={16} /></DockTool>
        </DockTools>
        <Tree $fill>
            <TreeList>
                <TreeRow $bold $active>
                    <LayerRow id="l1" icon="redBox" text="RiechFieldGrids48x48" />
                </TreeRow>
                <TreeRow $bold>
                    <LayerRow id="l2" icon="raster" text="ndvi_04-04-2022" open />
                </TreeRow>
                <Legend>
                    Kanal 1 (Gray)
                    <LegendRamp>
                        <LegendValues><span>0,676704</span><span>0,052301</span></LegendValues>
                    </LegendRamp>
                </Legend>
                <TreeRow $bold>
                    <LayerRow id="l3" icon="raster" text="OpenStreetMap" open />
                </TreeRow>
            </TreeList>
        </Tree>
    </LeftDock>
);

/* ---------- map ---------- */

const MapPane = styled.section`
    flex: 1;
    min-width: 0;
    margin-right: 6px;
    border: 1px solid #a9a9a9;
    overflow: hidden;
    background: #edefd5;
`;
const MapSvg = styled.svg`
    display: block;
    width: 100%;
    height: 100%;
`;

const RAMP = [[247, 252, 245], [229, 245, 224], [199, 233, 192], [161, 217, 155], [116, 196, 118], [65, 171, 93], [35, 139, 69], [0, 109, 44], [0, 68, 27]];
const rampColor = (v) => {
    const t = Math.min(Math.max(v, 0), 0.999) * 8;
    const i = Math.floor(t);
    const c = RAMP[i].map((a, k) => Math.round(a + (RAMP[i + 1][k] - a) * (t - i)));
    return `rgb(${c.join(",")})`;
};
/* column, row, strength, radius x, radius y */
const SPOTS = [
    [9, 3.5, 0.1, 2.5, 1.6], [8, 5.5, 0.05, 4, 2], [13.5, 8.5, 0.08, 2, 2], [5, 8.5, 0.08, 1.5, 1.2], [0, 10, 0.17, 1.2, 2.5], [4.5, 15.2, 0.1, 2, 1.2],
    [20, 5.5, 0.07, 4, 1.6], [30, 8.5, 0.07, 3, 2], [33, 13.5, 0.17, 2, 2.5], [6, 19, 0.07, 1.6, 3], [14.5, 23.5, 0.1, 2.5, 2], [17, 26.5, 0.06, 4, 1.5],
    [24, 31.3, 0.09, 2, 1.6], [33, 31, 0.1, 3, 3], [5, 27, 0.05, 2.5, 2], [22.5, 28.5, 0.06, 2, 1.5], [11, 32, 0.05, 5, 1.5], [14, 15, 0.04, 2, 4], [9, 20, 0.05, 4, 3],
    [3, 3, -0.15, 1.2, 1.8], [16, 2.3, -0.12, 2, 0.8], [24, 4, -0.1, 2, 1.3], [31.5, 2, -0.16, 3, 1], [28, 15, -0.15, 2.4, 1.6], [23, 13.6, -0.08, 3, 1.5],
    [31.5, 18, -0.14, 2.2, 1.6], [6, 12, -0.04, 2, 2], [19, 22.5, -0.05, 2, 2], [31, 24, -0.05, 3, 2], [2, 20, -0.1, 1.5, 3], [28, 20, -0.03, 3, 2],
];
const cellValue = (x, y) => {
    const noise = (((x * 37 + y * 91 + x * y * 13) % 17) / 17 - 0.5) * 0.014;
    if (y === 0) return 0.38 - x * 0.009 + noise * 3;
    if (y >= 36) return (x < 1 ? 0.48 : [0.3, 0.26, 0.26][y - 36]) + noise * 2;
    if (y === 1) return 0.44 - x * 0.007 + noise * 3;
    if (y === 35) return (x < 1 ? 0.52 : 0.4) + noise;
    if (y === 34) return 0.53 + noise;
    if (y === 33) return 0.6 + noise;
    let v = SPOTS.reduce((s, [cx, cy, a, rx, ry]) => s + a * Math.exp(-(((x - cx) / rx) ** 2) - ((y - cy) / ry) ** 2), 0.655);
    if (x === 1) v -= 0.03;
    if (x === 2) v -= 0.09;
    return v + noise;
};
const CELLS = [];
for (let y = 0; y < 39; y++) for (let x = 0; x < 72; x++) CELLS.push([x, y, rampColor(cellValue(x, y))]);
const TREES = [[0, 122], [12, 154], [3, 196], [10, 238], [0, 274], [2, 326], [0, 368], [3, 400], [4, 450], [0, 498]];

const FieldMap = () => (
    <MapPane aria-label="Karte">
        <MapSvg>
            <path d="M0 65h310v35H0z" fill="#f2ebda" />
            <path d="M0 91q180-6 390 5h500" fill="none" stroke="#f4f3e6" strokeWidth="6" />
            <path d="M0 91q180-6 390 5h500" fill="none" stroke="#bd9246" strokeWidth="2.500" strokeDasharray="4 8.800" />
            <path d="M0 99l80-1 310 5h500v18H0z" fill="#fff" stroke="#b5b5b5" />
            <path d="M0 120h21v190L3 559H0z" fill="#abd0a3" />
            <path d="M21 320L6 640" stroke="#f4f3e6" strokeWidth="5" />
            <path d="M21 320L6 640" stroke="#bd9246" strokeWidth="2.500" strokeDasharray="4 8.800" />
            {TREES.map(([x, y]) => <path key={y} d={`M${x} ${y + 9}l4-8 4 8zM${x + 4} ${y + 9}v4`} fill="none" stroke="#98bf8f" />)}
            <path d="M821 0h40v900h-40z" fill="#f3d0ac" />
            <g transform="translate(20 102)" shapeRendering="crispEdges">
                {CELLS.map(([x, y, fill]) => <rect key={x + "-" + y} x={x * 10.75} y={y * 10.87} width="10.750" height="10.870" fill={fill} />)}
            </g>
            <g stroke="#e6191b" strokeWidth="3.500" fill="none">
                {[0, 1, 2, 3, 4, 5, 6, 7].map((i) => <path key={i} d={`M47.500 ${121.5 + i * 51.4}H805`} />)}
                {[0, 1, 2, 3, 4, 5, 6, 7, 8, 9, 10].map((i) => <path key={i} d={`M${47.5 + i * 51.4} 120V483`} />)}
            </g>
        </MapSvg>
    </MapPane>
);

/* ---------- right dock ---------- */

const RightDock = styled.aside`
    display: flex;
    flex-direction: column;
    flex: none;
    width: 330px;
`;
const DockSearch = styled.input`
    height: 22px;
    margin-top: 30px;
    border: 1px solid #a9a9a9;
    background: #fff;
`;
const DockBody = styled.div`
    flex: 1;
    background: #fff;
    border-bottom: 1px solid #b0b0b0;
`;
const Tabs = styled.div`
    display: flex;
    align-items: flex-start;
    height: 25px;
`;
const Tab = styled.button`
    height: ${(p) => (p.$on ? 24 : 22)}px;
    padding: 4px 10px 0;
    border: 1px solid #a9a9a9;
    border-top: 0;
    border-radius: 0 0 3px 3px;
    background: ${(p) => (p.$on ? "#f5f5f5" : "#dedede")};
    line-height: 14px;
`;

/* ---------- status bar ---------- */

const StatusBar = styled.footer`
    display: flex;
    align-items: center;
    flex: none;
    height: 26px;
    padding: 4px 27px 0 1px;
    white-space: nowrap;
`;
const StatusBox = styled.div`
    display: flex;
    align-items: center;
    width: ${(p) => p.$w}px;
    height: 22px;
    margin-right: ${(p) => p.$gap || 7}px;
    border: 1px solid #a9a9a9;
    border-radius: 2px;
    background: #fff;
    input {
        flex: 1;
        min-width: 0;
        padding: 0 5px;
        border: 0;
        background: none;
        outline: 0;
    }
    input::placeholder { color: #777; }
    & > svg { margin-left: 7px; }
`;
const StatusText = styled.span`
    flex: 1;
`;
const StatusLabel = styled.label`
    margin-right: ${(p) => p.$gap || 4}px;
`;
const StatusIcon = styled.span`
    margin-right: ${(p) => p.$right}px;
`;
const Spinner = styled.span`
    display: flex;
    flex-direction: column;
    justify-content: center;
    gap: 5px;
    align-self: stretch;
    align-items: center;
    width: 14px;
    border-left: 1px solid #bbb;
`;
const ComboEnd = styled(Spinner)`
    width: 20px;
`;
const DrawCheck = styled(Check)`
    margin-right: 4px;
`;

/* ---------- dialog ---------- */

const Dialog = styled.section`
    position: absolute;
    left: 706px;
    top: 130px;
    width: 741px;
    background: #f0f0f0;
    border: 1px solid #6b6b6b;
    box-shadow: 0 6px 22px rgba(0, 0, 0, 0.45);
`;
const DialogTitle = styled.header`
    display: flex;
    align-items: center;
    gap: 6px;
    height: 30px;
    padding: 0 10px 0 7px;
    background: #fff;
    font: 11px/16px "Noto Sans", sans-serif;
    h1 { flex: 1; margin: 0; font: inherit; }
`;
const DialogBody = styled.form`
    display: flex;
    flex-direction: column;
    gap: 6px;
    padding: 11px 11px 12px;
`;
const Section = styled.div`
    display: grid;
    grid-template-columns: 16px 1fr;
`;
const StepNumber = styled.b`
    line-height: 18px;
    font-size: 12px;
`;
const Stack = styled.div`
    display: flex;
    flex-direction: column;
    flex: ${(p) => (p.$w ? "none" : 1)};
    width: ${(p) => (p.$w ? p.$w + "px" : "auto")};
    min-width: 0;
    gap: 6px;
    padding-top: ${(p) => p.$top || 0}px;
    align-items: ${(p) => p.$align || "stretch"};
`;
const Line = styled.div`
    display: flex;
    align-items: ${(p) => p.$align || "center"};
    gap: 6px;
    min-height: ${(p) => p.$h || 21}px;
    padding-left: ${(p) => p.$left || 0}px;
    padding-right: ${(p) => p.$right || 0}px;
    padding-top: ${(p) => p.$top || 0}px;
    justify-content: ${(p) => p.$justify || "flex-start"};
    white-space: nowrap;
`;
const Rule = styled.hr`
    height: 3px;
    margin: 0 0 0 ${(p) => p.$left || 0}px;
    border: 0;
    border-top: 1px solid #a0a0a0;
    background: #fdfdfd;
`;
const VRule = styled.span`
    align-self: stretch;
    width: 3px;
    margin-left: ${(p) => (p.$push ? "auto" : (p.$gap || 0) + "px")};
    border-left: 1px solid #a0a0a0;
    background: #fafafa;
`;
const control = css`
    height: 22px;
    padding: 0 3px;
    border: 1px solid #a9a9a9;
    border-radius: 3px;
    width: ${(p) => (p.$w ? p.$w + "px" : "auto")};
    flex: ${(p) => (p.$w ? "none" : "1 1 0")};
    min-width: 0;
`;
const TONES = {
    plain: ["#fefefe", "#ebebeb", "#a9a9a9"],
    green: ["#d6fcc4", "#b9f39d", "#76b35a"],
    focus: ["#d3f8c6", "#b8f1a5", "#3fa0f0"],
    orange: ["#ffd2bb", "#fbb897", "#b9694b"],
    blue: ["#aad2ff", "#9cc8ff", "#3f7cc2"],
};
const Button = styled.button.attrs({ type: "button" })`
    ${control}
    height: ${(p) => p.$h || 21}px;
    padding: 0;
    background: linear-gradient(${(p) => TONES[p.$tone || "plain"][0]}, ${(p) => TONES[p.$tone || "plain"][1]});
    border-color: ${(p) => TONES[p.$tone || "plain"][2]};
    font-weight: ${(p) => (p.$bold ? 700 : 400)};
    font-style: ${(p) => (p.$italic ? "italic" : "normal")};
    white-space: nowrap;
`;
const NButton = styled(Button)`
    height: 22px;
    background: #ececec;
    color: #f00;
    font-weight: 700;
`;
const NoteButton = styled(Button)`
    font-family: "Noto Sans", sans-serif;
    font-size: 10px;
`;
const TextBox = styled.input`
    ${control}
    background: #fff;
    text-align: center;
`;
const PathBox = styled(TextBox)`
    padding: 0 1px;
    font-family: "Noto Sans", sans-serif;
    font-size: 10px;
    text-align: left;
`;
const TextArea = styled.textarea`
    ${control}
    height: ${(p) => p.$h}px;
    border-radius: 0;
    background: #fff;
    resize: none;
`;
const Progress = styled.div.attrs({ role: "progressbar", "aria-valuenow": 0 })`
    ${control}
    height: 19px;
    background: #fff;
    line-height: 17px;
    font-size: 10px;
    text-align: center;
`;
const SelectWrap = styled.span`
    position: relative;
    display: flex;
    flex: ${(p) => (p.$w ? "none" : "1")};
    width: ${(p) => (p.$w ? p.$w + "px" : "auto")};
    &::after {
        content: "";
        position: absolute;
        right: 7px;
        top: 9px;
        width: 8px;
        height: 5px;
        background: #555;
        clip-path: polygon(0 0, 100% 0, 50% 100%);
        pointer-events: none;
    }
`;
const SelectBox = styled.select`
    appearance: none;
    flex: 1;
    min-width: 0;
    height: 22px;
    padding: 1px 3px 0;
    border: 1px solid #a9a9a9;
    border-radius: 3px;
    background: linear-gradient(#fefefe, #ebebeb);
`;
const Select = ({ value, w, label }) => (
    <SelectWrap $w={w}>
        <SelectBox aria-label={label}><option>{value}</option></SelectBox>
    </SelectWrap>
);
const Label = styled.label`
    width: ${(p) => (p.$w ? p.$w + "px" : "auto")};
    flex: none;
    color: ${(p) => p.$color || "inherit"};
    font-weight: ${(p) => (p.$bold ? 700 : 400)};
    line-height: 14px;
    white-space: pre;
`;
const Fill = styled.span`
    flex: 1;
`;
const RasterHints = styled.div`
    display: flex;
    flex-direction: column;
    justify-content: space-between;
    flex: none;
    width: 237px;
    height: 71px;
    padding-bottom: 2px;
    line-height: 14px;
`;
const RasterList = styled.ul`
    flex: 1;
    height: 71px;
    border: 1px solid #a9a9a9;
    background: #fff;
    line-height: 13px;
`;
const RasterItem = styled.li`
    padding: ${(p) => (p.$on ? "1px 2px 0" : "0 2px")};
    background: ${(p) => (p.$on ? "#aaff7f" : "none")};
`;

const NField = ({ label, value, id }) => (
    <Line $h={22} $justify="flex-end">
        <Label htmlFor={id}>{label}</Label>
        <NButton $w={25}>[N]</NButton>
        <TextBox id={id} $w={70} defaultValue={value} />
    </Line>
);

const NitrogenDialog = () => (
    <Dialog role="dialog" aria-labelledby="dlg">
        <DialogTitle>
            <Icon name="logo" size={16} />
            <h1 id="dlg">vom NDVI zur variablen Stickstoff ausbringung Karte</h1>
            <DockButton aria-label="Schließen"><Icon name="close" size={11} /></DockButton>
        </DialogTitle>
        <DialogBody>
            <Section>
                <StepNumber>1.</StepNumber>
                <Line $align="stretch">
                    <Stack>
                        <Line $h={22} $align="flex-start">
                            <Label $w={237}>Layer hinzufügen - Gitter (teilflächenspezifische):</Label>
                            <Select value="RiechFieldGrids48x48" label="Layer" />
                        </Line>
                        <Rule />
                        <Line $align="stretch">
                            <RasterHints>
                                <span>Rasterlayer hinzufügen - NDVI oder EVI Raster</span>
                                <span>Dateiname muss mit Datum enden</span>
                                <span>...NDVI_03-24-2023) (LayerName_M-T-J)</span>
                            </RasterHints>
                            <RasterList>
                                <RasterItem $on>ndvi_04-04-2022</RasterItem>
                                <RasterItem>OpenStreetMap</RasterItem>
                                <RasterItem>RiechFieldGrids48x48</RasterItem>
                            </RasterList>
                        </Line>
                    </Stack>
                    <VRule />
                    <Button $w={80} $h={108} $tone="blue" $bold $italic>Anleitung!</Button>
                </Line>
            </Section>
            <Rule />
            <Section>
                <StepNumber>2.</StepNumber>
                <Stack $top={6}>
                    <Line $h={22}>
                        <Select value="G-Grün" w={63} label="Farbe" />
                        <VRule />
                        <Label htmlFor="k" $w={95}>Zahl Index Klassen:</Label>
                        <TextBox id="k" $w={30} defaultValue="3" />
                        <VRule />
                        <Select value="mean" w={60} label="Statistik" />
                        <VRule />
                        <Check id="mm" defaultChecked />
                        <Label htmlFor="mm" $bold>Benutze Layer-spezifisches Index Min/Max (Ungechekt ist 0 and 1)</Label>
                    </Line>
                    <Line $h={22} $align="flex-start">
                        <Button $w={172} $italic>Auswähle Output Ordner</Button>
                        <PathBox aria-label="Ordner" defaultValue="ser\smunz\Desktop\emir-QGISplugin-TEST\ndvi-mapper-test-files\SampleImage-TestPlugin\InputLayer-Grids" />
                    </Line>
                    <Line>
                        <Button $w={172} $tone="green" $bold>Bild/Raster Analize</Button>
                        <Progress>0%</Progress>
                    </Line>
                </Stack>
            </Section>
            <Rule />
            <Section>
                <StepNumber>3.</StepNumber>
                <Line $align="flex-start">
                    <TextArea $h={71} aria-label="Zeitreihe" />
                    <Stack $w={169}>
                        <Button $w={169} $tone="focus" $bold>Zeitreihentrends kalkulieren</Button>
                        <Line $h={19} $justify="space-between"><Label>Auswertung:</Label><Progress $w={100}>0%</Progress></Line>
                        <Line $h={19} $justify="space-between"><Label $w={63}>Abbildungen:</Label><Progress $w={100}>0%</Progress></Line>
                    </Stack>
                </Line>
            </Section>
            <Rule />
            <Section>
                <StepNumber>4.</StepNumber>
                <Stack>
                    <Line $h={19}>
                        <Check id="v1" defaultChecked $color="#e00" />
                        <Label htmlFor="v1" $bold $color="#f00">{"4.1  [N]  Variable N applikation"}</Label>
                        <Fill />
                        <Check id="v2" />
                        <Label htmlFor="v2" $bold $w={334} $color="#00f">{"4.2  [Y]  Variable Ertrag potential"}</Label>
                    </Line>
                    <Rule />
                    <Line $align="stretch">
                        <TextArea $h={78} aria-label="Karten" />
                        <Stack $w={208}>
                            <NField id="menge" label="Feldspezifisch Menge" value="70" />
                            <NField id="klassen" label="Zahl der Klassen" value="3" />
                            <Line $h={19}>
                                <Check id="out" disabled />
                                <Label htmlFor="out" $bold $color="#808080">Kartierung ohne Outliers!</Label>
                            </Line>
                        </Stack>
                        <VRule />
                        <Stack $w={131}>
                            <Line $h={22}><Check id="fix" /><Label htmlFor="fix">Fixed (min;max):</Label></Line>
                            <NField id="min" label="min:" value="50" />
                            <NField id="max" label="max:" value="90" />
                        </Stack>
                    </Line>
                </Stack>
            </Section>
            <Rule $left={13} />
            <Line $h={22} $left={13}>
                <NButton $w={25}>[N]</NButton>
                <LayerCheck id="maxi" defaultChecked />
                <Label htmlFor="maxi" $bold>Maximieren!</Label>
                <VRule $gap={5} />
                <NButton $w={25}>[N]</NButton>
                <Check id="homo" />
                <Label htmlFor="homo" $bold>Homogenizieren (Ausgleichen)!</Label>
                <VRule $push />
                <Progress $w={98}>0%</Progress>
                <Select value="R-Rot" w={63} label="Farbe N" />
                <Button $w={139} $tone="orange" $bold>Karten Erstellen</Button>
            </Line>
            <Rule $left={13} />
            <Line $h={22} $left={13} $right={6} $top={6}>
                <Label htmlFor="np" $w={29}>N (%)</Label>
                <TextBox id="np" $w={50} defaultValue="27" />
                <Button>Umrechnung von N (kg/ha) in Düngemittel (kg/ha)</Button>
                <VRule />
                <NoteButton $w={306}>Die Skalierung entspricht der tatsächlichen Größe eines Gitters</NoteButton>
            </Line>
            <Rule $left={13} />
            <Line $left={13} $right={6} $align="flex-start">
                <TextArea $h={76} aria-label="Ausgabe" />
                <Stack $w={97} $align="flex-end">
                    <Select value="" w={97} label="Ebene" />
                    <Button $w={97} $bold>Export [.shp]</Button>
                    <Button $w={80}>Schließen</Button>
                </Stack>
            </Line>
        </DialogBody>
    </Dialog>
);

const Marker = styled.div`
    position: absolute;
    left: ${(p) => p.$x}px;
    top: ${(p) => p.$y}px;
    width: 31px;
    height: 36px;
    padding-left: 7px;
    background: #b5e61d;
    color: #ed1c24;
    font: 25px/36px "Open Sans", "Noto Sans", sans-serif;
`;
const MARKERS = [[223, 376], [128, 438], [1288, 57], [1038, 119], [1230, 154], [1268, 201]];

const App = () => {
    return (
        <Window>
            <GlobalStyle />
            <TitleBar>
                <Icon name="logo" size={16} />
                <TitleText>*Unbenanntes Projekt — QGIS</TitleText>
                {["minimize", "maximize", "close"].map((n) => (
                    <WindowButton key={n} aria-label={n}><Icon name={n} size={12} /></WindowButton>
                ))}
            </TitleBar>
            <MenuBar>
                {MENU.map(([pre, key, rest]) => (
                    <MenuLink key={rest} href="#">{pre}<u>{key}</u>{rest}</MenuLink>
                ))}
            </MenuBar>
            {ROWS.map((row) => <ToolBar key={row} items={row} />)}
            <Main>
                <Docks />
                <FieldMap />
                <RightDock>
                    <DockHead title="" flush />
                    <DockSearch aria-label="Suche" />
                    <DockBody />
                    <Tabs>
                        <Tab>Layergestaltung</Tab>
                        <Tab $on>Verarbeitungswerkzeuge</Tab>
                    </Tabs>
                </RightDock>
            </Main>
            <StatusBar>
                <StatusBox $w={200}><Icon name="search" size={14} /><input aria-label="Suche" placeholder="Suchmuster (Strg+K)" /></StatusBox>
                <StatusText>Eintrag der Legende gelöscht.</StatusText>
                <StatusLabel htmlFor="ko">Koordinate</StatusLabel>
                <StatusBox $w={119} $gap={4}><input id="ko" defaultValue="993065,9  6231988,1" /></StatusBox>
                <StatusIcon $right={11}><Icon name="extent" size={16} /></StatusIcon>
                <StatusLabel htmlFor="ms">Maßstab</StatusLabel>
                <StatusBox $w={80} $gap={12}><input id="ms" defaultValue="1:3529" /><ComboEnd><Caret /></ComboEnd></StatusBox>
                <StatusIcon $right={7}><Icon name="lock" size={14} /></StatusIcon>
                <StatusLabel htmlFor="vg">Vergrößerung</StatusLabel>
                <StatusBox $w={83}><input id="vg" defaultValue="100%" /><Spinner><ScrollArrow $up /><Caret /></Spinner></StatusBox>
                <StatusLabel htmlFor="dr" $gap={8}>Drehung</StatusLabel>
                <StatusBox $w={84}><input id="dr" defaultValue="0,0 °" /><Spinner><ScrollArrow $up /><Caret /></Spinner></StatusBox>
                <DrawCheck id="zn" defaultChecked />
                <StatusLabel htmlFor="zn" $gap={13}>Zeichnen</StatusLabel>
                <Icon name="proj" size={16} />
                <StatusLabel as="span" $gap={23}>EPSG:3857</StatusLabel>
                <Icon name="chat" size={16} />
            </StatusBar>
            <NitrogenDialog />
            {MARKERS.map(([x, y], i) => <Marker key={i} $x={x} $y={y}>{i + 1}.</Marker>)}
        </Window>
    )
}

export default App
